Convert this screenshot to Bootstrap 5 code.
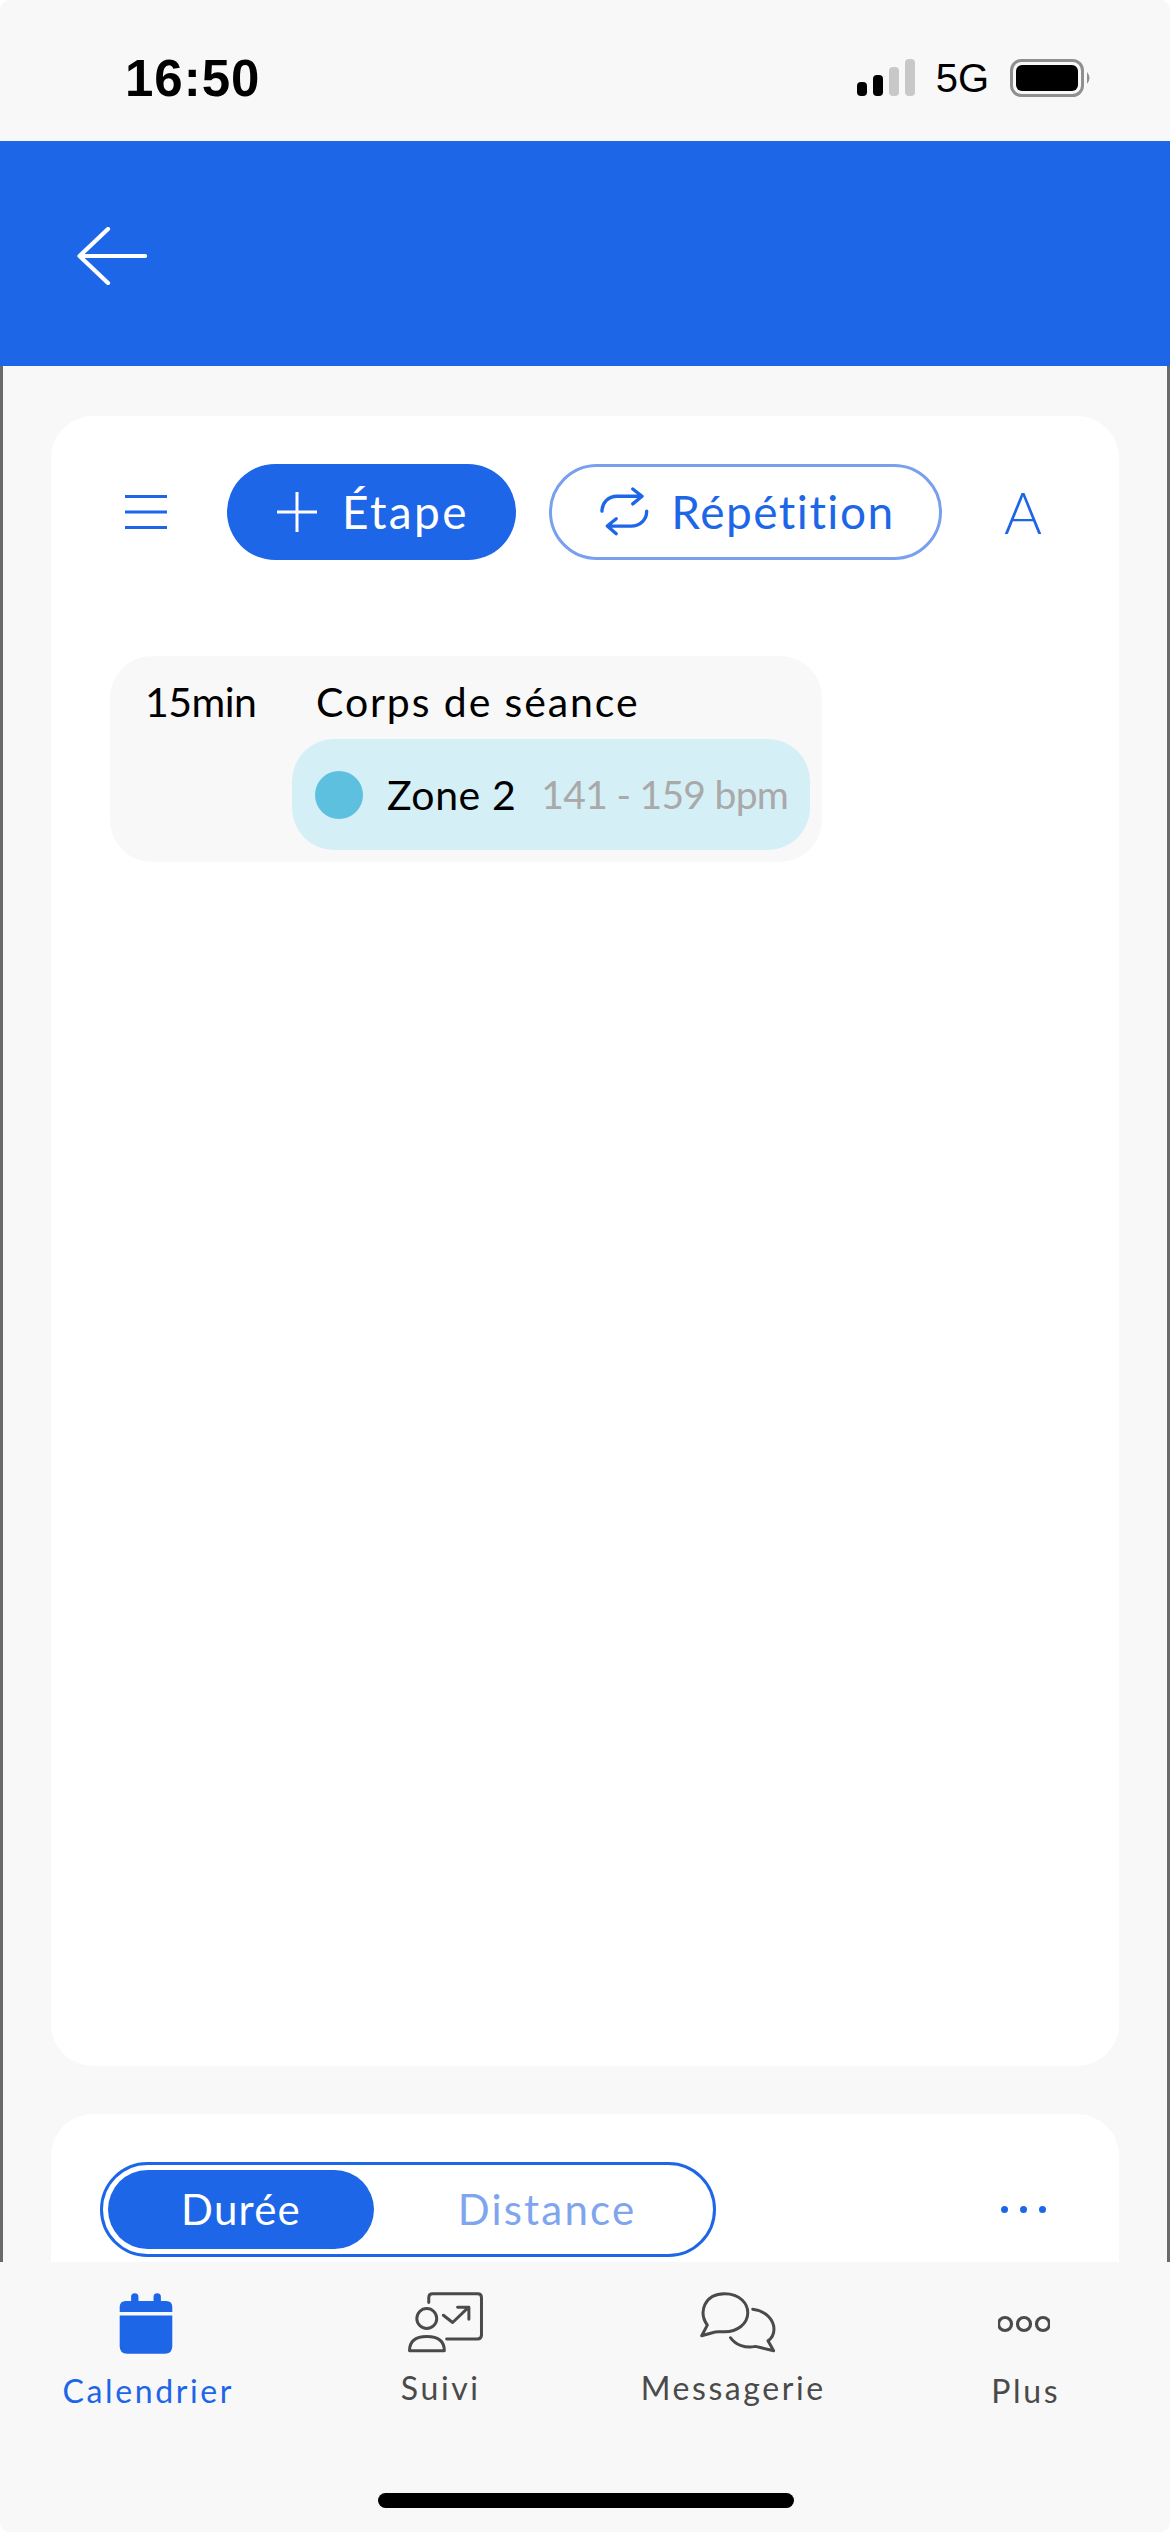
<!DOCTYPE html>
<html lang="fr">

<head>
    <meta charset="utf-8">
    <title>Calendrier</title>
    <link rel="stylesheet" href="https://cdn.jsdelivr.net/npm/bootstrap@5.3.0/dist/css/bootstrap.min.css">
    <style>
        body {
            background: #fff;
            font-family: "Lato", "Liberation Sans", sans-serif;
            margin: 0;
        }

        .phone {
            width: 1170px;
            height: 2532px;
            overflow: hidden;
            background: #f8f8f8;
            border-radius: 10px;
        }

        /* barre d'état */
        .status-bar {
            height: 141px;
            padding: 15px 78px 0 125px;
            font-family: "Liberation Sans", sans-serif;
        }

        .status-time {
            font-size: 51px;
            font-weight: 700;
            line-height: 1;
            letter-spacing: 1px;
            color: #000;
        }

        .status-net {
            font-size: 40px;
            line-height: 1;
            color: #000;
            margin: 0 21px;
        }

        .top-bar {
            height: 225px;
            background: #1e66e8;
            padding: 5px 0 0 77px;
        }

        .screen {
            height: 1896px;
            overflow: hidden;
            border-left: 3px solid #6a6a6a;
            border-right: 3px solid #6a6a6a;
            padding: 50px 48px 0;
        }

        .sheet {
            background: #fff;
            border-radius: 42px;
        }

        .sheet-main {
            height: 1650px;
            padding: 48px 59px 0;
        }

        .sheet-bottom {
            height: 300px;
            margin-top: 48px;
            padding: 48px 73px 0 49px;
        }

        .tool-menu {
            width: 42px;
            margin: 0 60px 0 15px;
        }

        .tool-btn {
            height: 96px;
            font-size: 46px;
            line-height: 1;
            letter-spacing: 1.5px;
            padding: 0;
            color: #1e66e8;
        }

        .btn-step {
            width: 289px;
            background: #1e66e8;
            border: 0;
            color: #fff;
            gap: 25px;
            padding-left: 3px;
            letter-spacing: 2.4px;
        }

        .btn-step:hover {
            background: #1e66e8;
            color: #fff;
        }

        .btn-repeat {
            width: 393px;
            margin-left: 33px;
            background: #fff;
            border: 3px solid #78a0ef;
            gap: 20px;
            padding-left: 2px;
        }

        .tool-font {
            margin-left: 62px;
            font-size: 58px;
            font-weight: 300;
            line-height: 1;
            color: #1e66e8;
        }

        .step-box {
            width: 712px;
            height: 206px;
            margin-top: 96px;
            background: #f8f8f8;
            border-radius: 42px;
            padding: 0 12px 11px 35px;
            color: #000;
            font-size: 41px;
            letter-spacing: 1.9px;
            white-space: nowrap;
        }

        .step-time {
            width: 171px;
            height: 84px;
            line-height: 92px;
            letter-spacing: -0.5px;
        }

        .step-title {
            height: 84px;
            line-height: 92px;
        }

        .zone-pill {
            width: 518px;
            height: 111px;
            margin-left: 147px;
            margin-top: -1px;
            background: #d5eff6;
            border-radius: 42px;
            padding-left: 23px;
            letter-spacing: 0.6px;
        }

        .zone-dot {
            width: 48px;
            height: 48px;
            background: #5cc0de;
            margin-right: 24px;
            flex-shrink: 0;
        }

        .zone-range {
            color: #a9a9a9;
            margin-left: 25px;
            font-size: 39px;
            letter-spacing: -0.7px;
        }

        .mode-switch {
            width: 616px;
            height: 95px;
            border: 3px solid #1e66e8;
            padding: 5px;
            font-size: 42px;
            letter-spacing: 1.2px;
        }

        .mode-on {
            width: 266px;
            background: #1e66e8;
            color: #fff;
        }

        .mode-off {
            flex: 1;
            color: #7fa5ef;
            padding-left: 12px;
            letter-spacing: 2.2px;
        }

        .more-dots {
            gap: 12px;
            margin-top: 44px;
        }

        .more-dots span {
            width: 7px;
            height: 7px;
            background: #1e66e8;
        }

        .tab-bar {
            height: 270px;
            background: #f8f8f8;
            position: relative;
        }

        .tab-item {
            width: 292.5px;
            padding-top: 29px;
            font-size: 32px;
            line-height: 36px;
            letter-spacing: 2.6px;
            color: #4a4a4a;
        }

        .tab-item.on {
            color: #1e66e8;
        }

        .tab-item > span {
            padding-left: 4px;
        }

        .tab-icon {
            height: 66px;
            margin-bottom: 16px;
        }

        .tab-icon-shift {
            margin-left: 14px;
        }

        .tab-label-up {
            margin-top: -3px;
        }

        .home-bar {
            width: 416px;
            height: 15px;
            background: #000;
            position: absolute;
            left: 378px;
            top: 231px;
        }
    </style>
</head>

<body>
    <div class="phone d-flex flex-column">
        <!-- barre d'état -->
        <div class="status-bar d-flex align-items-center justify-content-between">
            <div class="status-time">16:50</div>
            <div class="d-flex align-items-center">
                <svg width="58" height="38" viewBox="0 0 58 38">
                    <rect x="0" y="23" width="10" height="14" rx="4" fill="#000" />
                    <rect x="16" y="16" width="10" height="21" rx="4" fill="#000" />
                    <rect x="32" y="8" width="10" height="29" rx="4" fill="#c8c8c8" />
                    <rect x="48" y="0" width="10" height="37" rx="4" fill="#c8c8c8" />
                </svg>
                <span class="status-net">5G</span>
                <svg width="82" height="38" viewBox="0 0 82 38">
                    <rect x="1.5" y="1.5" width="71" height="35" rx="10" fill="none" stroke="#8f8f8f" stroke-width="3" />
                    <rect x="6" y="6" width="62" height="26" rx="6" fill="#000" />
                    <path d="M77 13 Q82 19 77 25 Z" fill="#8f8f8f" />
                </svg>
            </div>
        </div>

        <!-- barre bleue -->
        <div class="top-bar d-flex align-items-center">
            <svg width="70" height="58" viewBox="0 0 70 58" fill="none" stroke="#fff" stroke-width="4.2" stroke-linecap="round" stroke-linejoin="round">
                <path d="M31 2 L2.5 29 L31 56" />
                <path d="M4 29 H68" />
            </svg>
        </div>

        <div class="screen flex-grow-1">
            <div class="sheet sheet-main">
                <div class="d-flex align-items-center">
                    <svg class="tool-menu" height="34" viewBox="0 0 42 34" stroke="#1e66e8" stroke-width="3">
                        <path d="M0 1.5 H42 M0 17 H42 M0 32.5 H42" />
                    </svg>
                    <button class="btn tool-btn btn-step rounded-pill d-flex align-items-center justify-content-center" type="button">
                        <svg width="40" height="40" viewBox="0 0 40 40" stroke="#fff" stroke-width="3">
                            <path d="M20 0 V40 M0 20 H40" />
                        </svg>
                        Étape
                    </button>
                    <button class="btn tool-btn btn-repeat rounded-pill d-flex align-items-center justify-content-center" type="button">
                        <svg width="53" height="52" viewBox="50 50 160 155" fill="none" stroke="#1e66e8" stroke-width="10" stroke-linecap="round" stroke-linejoin="round">
                            <path d="M62 125 C62 100 80 80 108 80 H180 M155 58 L183 80 L155 103" />
                            <path d="M197 125 C197 150 178 170 150 170 H80 M105 148 L78 170 L105 193" />
                        </svg>
                        Répétition
                    </button>
                    <span class="tool-font">A</span>
                </div>

                <!-- étape -->
                <div class="step-box">
                    <div class="d-flex">
                        <div class="step-time">15min</div>
                        <div class="step-title">Corps de séance</div>
                    </div>
                    <div class="zone-pill d-flex align-items-center">
                        <span class="zone-dot rounded-circle"></span>
                        <span>Zone 2</span>
                        <span class="zone-range">141 - 159 bpm</span>
                    </div>
                </div>
            </div>

            <div class="sheet sheet-bottom d-flex justify-content-between align-items-start">
                <div class="mode-switch rounded-pill d-flex">
                    <div class="mode-on rounded-pill d-flex align-items-center justify-content-center">Durée</div>
                    <div class="mode-off d-flex align-items-center justify-content-center">Distance</div>
                </div>
                <div class="more-dots d-flex align-items-center">
                    <span class="rounded-circle"></span>
                    <span class="rounded-circle"></span>
                    <span class="rounded-circle"></span>
                </div>
            </div>
        </div>

        <!-- menu du bas -->
        <div class="tab-bar d-flex">
            <div class="tab-item on d-flex flex-column align-items-center">
                <div class="tab-icon">
                    <svg width="57" height="63" viewBox="85 60 170 188" fill="#1e66e8">
                        <rect x="124" y="67" width="22" height="50" rx="11" />
                        <rect x="191" y="67" width="22" height="50" rx="11" />
                        <path d="M90 123 V108 Q90 90 108 90 H229 Q247 90 247 108 V123 Z" />
                        <path d="M90 133 H247 V225 Q247 247 225 247 H112 Q90 247 90 225 Z" />
                    </svg>
                </div>
                <span>Calendrier</span>
            </div>
            <div class="tab-item d-flex flex-column align-items-center">
                <div class="tab-icon tab-icon-shift">
                    <svg width="80" height="63" viewBox="80 65 240 190" fill="none" stroke="#4a4a4a" stroke-width="9" stroke-linecap="round" stroke-linejoin="round">
                        <path d="M148 100 V85 Q148 73 160 73 H295 Q307 73 307 85 V198 Q307 210 295 210 H202" />
                        <circle cx="142" cy="148" r="30" />
                        <path d="M90 245 Q90 202 142 202 Q195 202 195 245 Z" />
                        <path d="M192 138 L220 160 L266 116 M235 114 H269 V150" />
                    </svg>
                </div>
                <span class="tab-label-up">Suivi</span>
            </div>
            <div class="tab-item d-flex flex-column align-items-center">
                <div class="tab-icon tab-icon-shift">
                    <svg width="78" height="63" viewBox="960 65 235 190" fill="none" stroke="#4a4a4a" stroke-width="9" stroke-linecap="round" stroke-linejoin="round">
                        <path d="M968 200 L985 168 C958 130 975 73 1037 73 C1085 73 1107 105 1107 130 C1107 165 1075 188 1037 188 C1020 188 1010 186 1003 190 Z" />
                        <path d="M1122 120 C1165 125 1186 155 1186 180 C1186 195 1178 208 1168 215 L1185 245 L1130 232 C1100 238 1070 228 1055 206" />
                    </svg>
                </div>
                <span class="tab-label-up">Messagerie</span>
            </div>
            <div class="tab-item d-flex flex-column align-items-center">
                <div class="tab-icon d-flex align-items-center">
                    <svg width="52" height="18" viewBox="1 0 52 18" fill="none" stroke="#4a4a4a" stroke-width="3.2">
                        <circle cx="8" cy="9" r="6.5" />
                        <circle cx="27" cy="9" r="6.5" />
                        <circle cx="46" cy="9" r="6.5" />
                    </svg>
                </div>
                <span>Plus</span>
            </div>
            <div class="home-bar rounded-pill"></div>
        </div>
    </div>

    <script src="https://cdn.jsdelivr.net/npm/bootstrap@5.3.0/dist/js/bootstrap.bundle.min.js"></script>
</body>

</html>
